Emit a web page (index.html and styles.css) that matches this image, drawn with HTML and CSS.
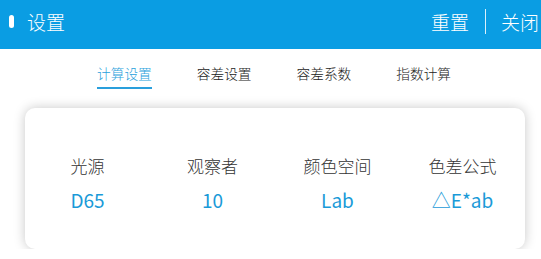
FILE: index.html
```html
<!DOCTYPE html>
<html lang="zh-CN">
<head>
<meta charset="utf-8">
<link rel="stylesheet" href="styles.css">
</head>
<body>
<header class="topbar">
  <div class="title-group">
    <span class="pill"></span>
    <span class="title">设置</span>
  </div>
  <div class="actions">
    <span class="action">重置</span>
    <span class="divider"></span>
    <span class="action">关闭</span>
  </div>
</header>
<nav class="tabs">
  <span class="tab active">计算设置</span>
  <span class="tab">容差设置</span>
  <span class="tab">容差系数</span>
  <span class="tab">指数计算</span>
</nav>
<section class="card">
  <div class="col"><div class="label">光源</div><div class="value">D65</div></div>
  <div class="col"><div class="label">观察者</div><div class="value">10</div></div>
  <div class="col"><div class="label">颜色空间</div><div class="value">Lab</div></div>
  <div class="col"><div class="label">色差公式</div><div class="value">△E*ab</div></div>
</section>
</body>
</html>
```
FILE: styles.css
```css
html, body {
  margin: 0;
  padding: 0;
  background: #ffffff;
  font-family: "Noto Sans CJK SC", "Noto Sans", sans-serif;
  font-weight: 300;
}
.topbar {
  height: 49px;
  background: #0a9de3;
  display: flex;
  align-items: center;
  justify-content: space-between;
  color: #ffffff;
}
.title-group {
  display: flex;
  align-items: center;
  padding-left: 9px;
  margin-top: -6px;
}
.pill {
  width: 5px;
  height: 13px;
  border-radius: 3px;
  background: #ffffff;
  margin-right: 13px;
}
.title {
  font-size: 19px;
  line-height: 24px;
}
.actions {
  display: flex;
  align-items: center;
  margin-top: -6px;
  padding-right: 2px;
}
.action {
  font-size: 19px;
  line-height: 24px;
}
.divider {
  width: 1px;
  height: 25px;
  background: rgba(255,255,255,0.85);
  margin: 0 15px 0 16px;
}
.tabs {
  display: flex;
  padding-left: 97px;
  gap: 45px;
  height: 41px;
  align-items: flex-start;
}
.tab {
  font-size: 13.7px;
  line-height: 20px;
  color: #222222;
  margin-top: 14px;
  height: 24px;
  box-sizing: border-box;
}
.tab.active {
  color: #2a9fdc;
  border-bottom: 2px solid #2a9fdc;
  height: 26px;
}
.card {
  margin: 18px 0 0 25px;
  width: 500px;
  height: 141px;
  box-sizing: border-box;
  border-radius: 10px;
  background: #ffffff;
  box-shadow: 0 0 12px rgba(0,0,0,0.22);
  display: grid;
  grid-template-columns: repeat(4, 1fr);
  padding-top: 47px;
}
.col {
  display: flex;
  flex-direction: column;
  align-items: center;
}
.label {
  font-size: 17px;
  line-height: 22px;
  color: #333333;
}
.value {
  font-size: 19px;
  line-height: 24px;
  font-weight: 400;
  margin-top: 11px;
  color: #1a9ad8;
}
```
